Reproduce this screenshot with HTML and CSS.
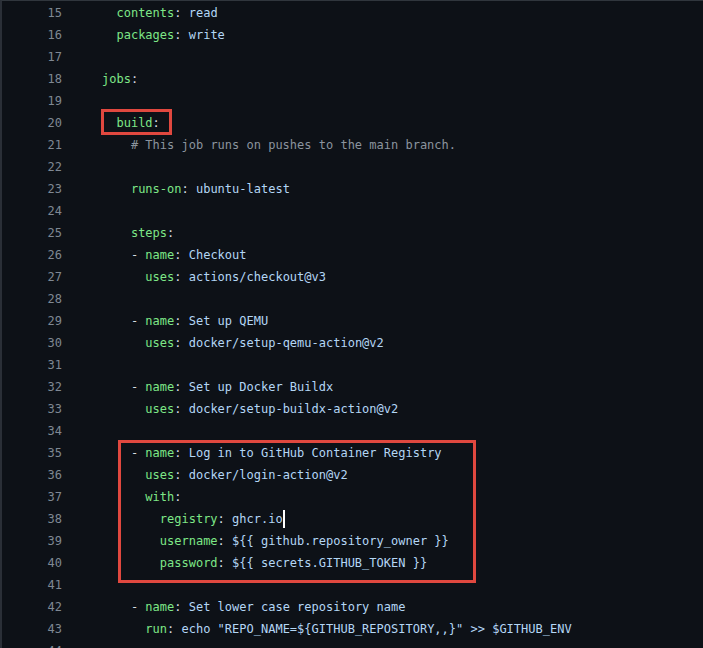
FILE: index.html
```html
<!DOCTYPE html>
<html>
<head>
<meta charset="utf-8">
<link rel="stylesheet" href="styles.css">
</head>
<body>
<div class="frame">
  <div class="code">
    <div class="ln"><span class="num">15</span><span class="src">  <span class="k">contents</span>: <span class="v">read</span></span></div>
    <div class="ln"><span class="num">16</span><span class="src">  <span class="k">packages</span>: <span class="v">write</span></span></div>
    <div class="ln"><span class="num">17</span><span class="src"></span></div>
    <div class="ln"><span class="num">18</span><span class="src"><span class="k">jobs</span>:</span></div>
    <div class="ln"><span class="num">19</span><span class="src"></span></div>
    <div class="ln"><span class="num">20</span><span class="src">  <span class="k">build</span>:</span></div>
    <div class="ln"><span class="num">21</span><span class="src">    <span class="c"># This job runs on pushes to the main branch.</span></span></div>
    <div class="ln"><span class="num">22</span><span class="src"></span></div>
    <div class="ln"><span class="num">23</span><span class="src">    <span class="k">runs-on</span>: <span class="v">ubuntu-latest</span></span></div>
    <div class="ln"><span class="num">24</span><span class="src"></span></div>
    <div class="ln"><span class="num">25</span><span class="src">    <span class="k">steps</span>:</span></div>
    <div class="ln"><span class="num">26</span><span class="src">    - <span class="k">name</span>: <span class="v">Checkout</span></span></div>
    <div class="ln"><span class="num">27</span><span class="src">      <span class="k">uses</span>: <span class="v">actions/checkout@v3</span></span></div>
    <div class="ln"><span class="num">28</span><span class="src"></span></div>
    <div class="ln"><span class="num">29</span><span class="src">    - <span class="k">name</span>: <span class="v">Set up QEMU</span></span></div>
    <div class="ln"><span class="num">30</span><span class="src">      <span class="k">uses</span>: <span class="v">docker/setup-qemu-action@v2</span></span></div>
    <div class="ln"><span class="num">31</span><span class="src"></span></div>
    <div class="ln"><span class="num">32</span><span class="src">    - <span class="k">name</span>: <span class="v">Set up Docker Buildx</span></span></div>
    <div class="ln"><span class="num">33</span><span class="src">      <span class="k">uses</span>: <span class="v">docker/setup-buildx-action@v2</span></span></div>
    <div class="ln"><span class="num">34</span><span class="src"></span></div>
    <div class="ln"><span class="num">35</span><span class="src">    - <span class="k">name</span>: <span class="v">Log in to GitHub Container Registry</span></span></div>
    <div class="ln"><span class="num">36</span><span class="src">      <span class="k">uses</span>: <span class="v">docker/login-action@v2</span></span></div>
    <div class="ln"><span class="num">37</span><span class="src">      <span class="k">with</span>:</span></div>
    <div class="ln"><span class="num">38</span><span class="src">        <span class="k">registry</span>: <span class="v">ghcr.io</span><span class="caret"></span></span></div>
    <div class="ln"><span class="num">39</span><span class="src">        <span class="k">username</span>: <span class="v">${{ github.repository_owner }}</span></span></div>
    <div class="ln"><span class="num">40</span><span class="src">        <span class="k">password</span>: <span class="v">${{ secrets.GITHUB_TOKEN }}</span></span></div>
    <div class="ln"><span class="num">41</span><span class="src"></span></div>
    <div class="ln"><span class="num">42</span><span class="src">    - <span class="k">name</span>: <span class="v">Set lower case repository name</span></span></div>
    <div class="ln"><span class="num">43</span><span class="src">      <span class="k">run</span>: <span class="v">echo "REPO_NAME=${GITHUB_REPOSITORY,,}" &gt;&gt; $GITHUB_ENV</span></span></div>
    <div class="ln"><span class="num">44</span><span class="src"></span></div>
  </div>
  <div class="mark mark-build"></div>
  <div class="mark mark-login"></div>
</div>
</body>
</html>
```

FILE: styles.css
```css
html, body {
  margin: 0;
  padding: 0;
  background: #0d1117;
  overflow: hidden;
}

.frame {
  position: relative;
  width: 703px;
  height: 648px;
  overflow: hidden;
}

.code {
  border-top: 1px solid #30363d;
  border-left: 2px solid #2a2f37;
  padding-top: 1px;
  font-family: "DejaVu Sans Mono", "Liberation Mono", monospace;
  font-size: 12px;
  color: #d7dde4;
}

.ln {
  display: grid;
  grid-template-columns: 60px 1fr;
  column-gap: 40px;
  height: 22px;
  line-height: 22px;
}

.num {
  text-align: right;
  color: #7f8893;
}

.src {
  white-space: pre;
}

.k { color: #7ee787; }
.v { color: #b4d6f5; }
.c { color: #8b949e; }

.caret {
  display: inline-block;
  width: 2px;
  height: 18px;
  background: #ffffff;
  vertical-align: -5px;
}

.mark {
  position: absolute;
  border: 3px solid #e0483f;
  box-sizing: border-box;
}

.mark-build {
  left: 101px;
  top: 109px;
  width: 71px;
  height: 26px;
}

.mark-login {
  left: 118px;
  top: 440px;
  width: 358px;
  height: 143px;
}
```
